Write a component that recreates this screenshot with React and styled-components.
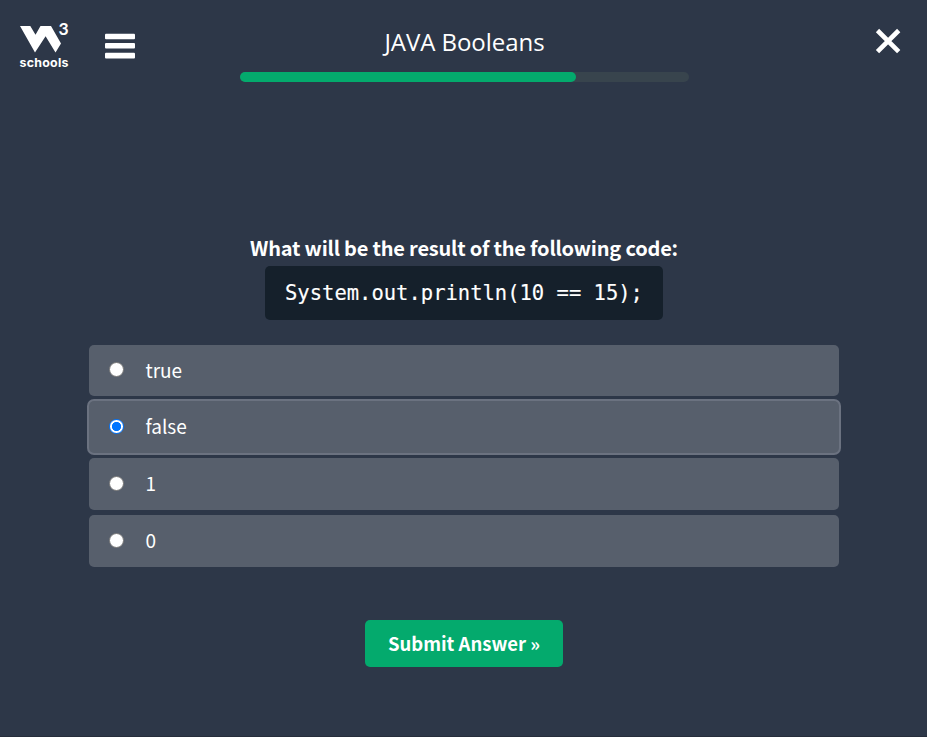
import React, { useState } from "react";
import styled, { createGlobalStyle } from "styled-components";

const GlobalStyle = createGlobalStyle`
  * { box-sizing: border-box; }
  body {
    margin: 0;
    background: #2d3748;
    color: #fff;
    font-family: "Noto Sans CJK SC", "Open Sans", sans-serif;
  }
`;

const Page = styled.div`
  display: flex;
  flex-direction: column;
  width: 100%;
  height: 737px;
  overflow: hidden;
  border-bottom: 1px solid #262d3b;
`;

const Header = styled.header`
  display: grid;
  grid-template-columns: 240px 1fr 238px;
  height: 100px;
`;

const HeaderLeft = styled.div`
  display: flex;
  align-items: flex-start;
  padding: 20px 0 0 18px;
  gap: 31px;
`;

const Logo = styled.svg`
  width: 56px;
  height: 52px;
  flex: none;
  overflow: visible;
`;

const LogoText = styled.text`
  font-family: ${(p) => p.$family}, sans-serif;
  font-weight: ${(p) => p.$weight};
  font-size: ${(p) => p.$size}px;
  fill: #fff;
`;

const IconButton = styled.button`
  display: flex;
  padding: 0;
  border: 0;
  background: none;
  color: #fff;
  cursor: pointer;
`;

const MenuButton = styled(IconButton)`
  margin-top: 13px;
`;

const CloseButton = styled(IconButton)`
  margin: 28px 26px 0 auto;
  align-self: start;
`;

const HeaderCenter = styled.div`
  display: flex;
  flex-direction: column;
  align-items: center;
`;

const Title = styled.h1`
  margin: 24px 0 0;
  height: 48px;
  font-family: "Open Sans", sans-serif;
  font-size: 24px;
  font-weight: 400;
  line-height: 36px;
  letter-spacing: -0.05px;
  white-space: nowrap;
`;

const Track = styled.div`
  width: 100%;
  height: 10px;
  border-radius: 5px;
  background: #38444d;
`;

const Progress = styled.div`
  width: 336px;
  height: 10px;
  border-radius: 5px;
  background: #04aa6d;
`;

const Quiz = styled.main`
  display: flex;
  flex-direction: column;
  align-items: center;
  padding-top: 132px;
`;

const Question = styled.p`
  margin: 0 0 0 1px;
  height: 34px;
  font-size: 20px;
  font-weight: 700;
  line-height: 32px;
  letter-spacing: -0.2px;
  white-space: nowrap;
`;

const Code = styled.code`
  display: flex;
  justify-content: center;
  width: 398px;
  height: 54px;
  margin-left: 1px;
  border-radius: 5px;
  background: #15202b;
  font-family: "DejaVu Sans Mono", monospace;
  font-size: 20.5px;
  line-height: 54px;
  white-space: pre;
  -webkit-text-stroke: 0.15px #fff;
`;

const Options = styled.div`
  display: grid;
  grid-template-rows: 51px 52px 52px 52px;
  row-gap: 5px;
  width: 750px;
  margin: 25px 0 0 1px;
`;

const Option = styled.label`
  display: flex;
  align-items: center;
  gap: 21.5px;
  padding: 0 0 2px 20px;
  border-radius: 5px;
  background: #575f6c;
  box-shadow: ${(p) => (p.$selected ? "0 0 0 2px #6b7280" : "none")};
  font-size: 19px;
  line-height: 30px;
  cursor: pointer;
`;

const Radio = styled.input`
  appearance: none;
  flex: none;
  width: 15px;
  height: 15px;
  margin: 0;
  border: ${(p) => (p.checked ? "1px solid #0075ff" : "1px solid #767676")};
  border-radius: 50%;
  background: ${(p) => (p.checked ? "radial-gradient(circle, #0075ff 4.3px, #fff 4.9px)" : "#fff")};
`;

const Submit = styled.button`
  width: 198px;
  height: 47px;
  margin: 53px 0 0 1px;
  padding: 0;
  border: 0;
  border-radius: 5px;
  background: #04aa6d;
  color: #fff;
  font-family: inherit;
  font-size: 18.5px;
  font-weight: 700;
  line-height: 47px;
  cursor: pointer;
`;

const answers = ["true", "false", "1", "0"];

export default function App() {
  const [selected, setSelected] = useState("false");
  return (
    <Page>
      <GlobalStyle />
      <Header>
        <HeaderLeft>
          <Logo viewBox="0 0 56 52">
            <path
              fill="#fff"
              d="M2 6H12.3L17.5 14.8L22.5 6H33L43 23.5L37.5 32.5L27.6 16.2L17 32.5Z"
            />
            <LogoText x="40.4" y="14.8" $family="Lato" $size={17.5} $weight={700}>3</LogoText>
            <LogoText x="1.5" y="46.5" $family="Inter" $size={12.4} $weight={700} textLength="49">schools</LogoText>
          </Logo>
          <MenuButton aria-label="Menu">
            <svg width="30" height="26" viewBox="0 0 30 26" fill="currentColor">
              <rect y="0.7" width="30" height="5.5" rx="1" />
              <rect y="10" width="30" height="5.5" rx="1" />
              <rect y="19.7" width="30" height="5.8" rx="1" />
            </svg>
          </MenuButton>
        </HeaderLeft>
        <HeaderCenter>
          <Title>JAVA Booleans</Title>
          <Track>
            <Progress />
          </Track>
        </HeaderCenter>
        <CloseButton aria-label="Close">
          <svg width="26" height="26" viewBox="0 0 26 26" stroke="currentColor" strokeWidth="4.6">
            <path d="M2.5 2.5L23.7 23.7M23.7 2.5L2.5 23.7" />
          </svg>
        </CloseButton>
      </Header>
      <Quiz>
        <Question>What will be the result of the following code:</Question>
        <Code>System.out.println(10 == 15);</Code>
        <Options>
          {answers.map((answer) => (
            <Option key={answer} $selected={answer === selected}>
              <Radio
                type="radio"
                name="answer"
                checked={answer === selected}
                onChange={() => setSelected(answer)}
              />
              {answer}
            </Option>
          ))}
        </Options>
        <Submit>Submit Answer »</Submit>
      </Quiz>
    </Page>
  );
}
